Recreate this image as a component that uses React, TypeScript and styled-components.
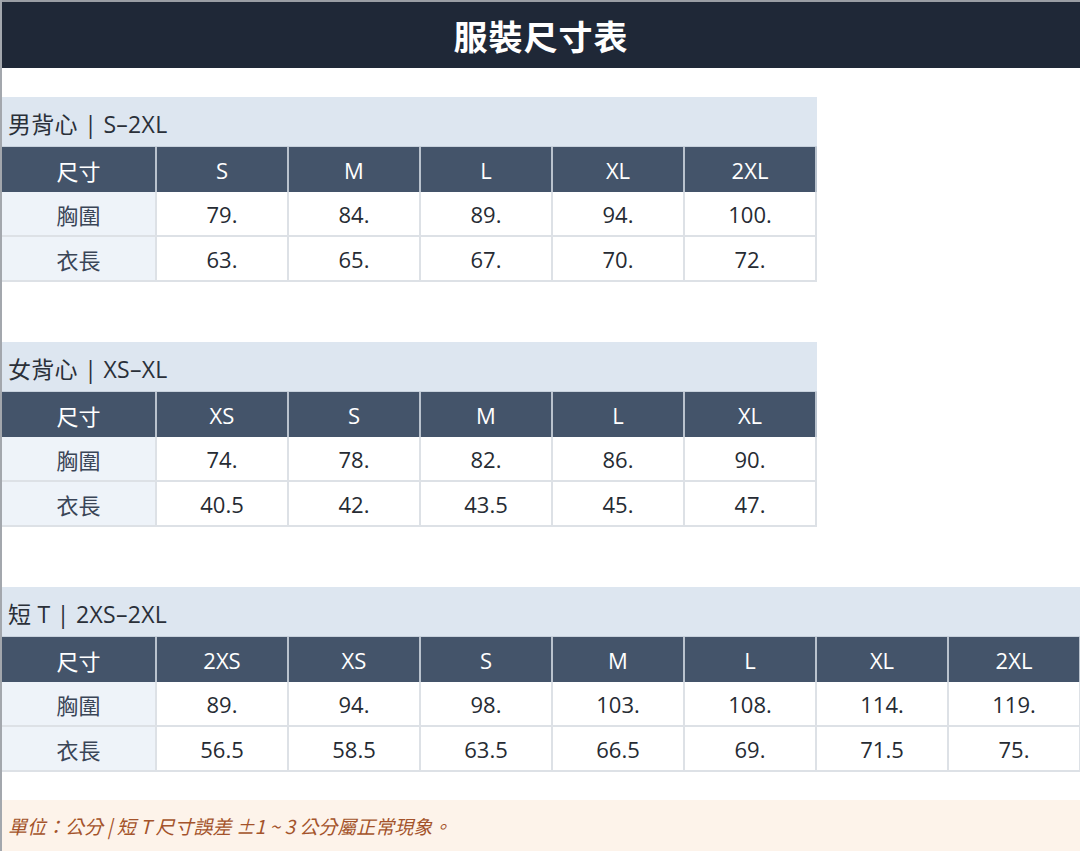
import React from "react";
import styled, { createGlobalStyle } from "styled-components";

const Global = createGlobalStyle`
  html, body { margin: 0; padding: 0; background: #ffffff; }
  body { font-family: "Open Sans", "Noto Sans CJK TC", sans-serif; }
`;

const Page = styled.div`
  width: 1080px;
  height: 851px;
  box-sizing: border-box;
  border-left: 2px solid #a3a7ad;
  display: flex;
  flex-direction: column;
  overflow: hidden;
`;

const TitleBar = styled.div`
  height: 68px;
  flex: none;
  box-sizing: border-box;
  border-top: 2px solid #9a9ea4;
  background: #1f2837;
  color: #ffffff;
  display: flex;
  align-items: center;
  justify-content: center;
  font-family: "Noto Sans CJK TC", sans-serif;
  font-weight: 700;
  font-size: 34px;
  letter-spacing: 1px;
`;

const Section = styled.section<{ $top: number }>`
  margin-top: ${(p) => p.$top}px;
  flex: none;
  display: flex;
  flex-direction: column;
`;

const SectionTitle = styled.div<{ $width: number }>`
  width: ${(p) => p.$width}px;
  height: 50px;
  box-sizing: border-box;
  background: #dde6f0;
  border-bottom: 1px solid #c7d1dc;
  display: flex;
  align-items: center;
  padding-left: 6px;
  padding-top: 2px;
  font-family: "Open Sans", "Noto Sans CJK TC", sans-serif;
  font-size: 23px;
  letter-spacing: 0.3px;
  color: #2a3039;
`;

const Grid = styled.div<{ $cols: number }>`
  display: grid;
  grid-template-columns: 155px repeat(${(p) => p.$cols}, 132px);
  grid-auto-rows: 45px;
`;

const HeadCell = styled.div`
  background: #44546a;
  color: #ffffff;
  display: flex;
  align-items: center;
  justify-content: center;
  font-family: "Open Sans", "Noto Sans CJK TC", sans-serif;
  font-size: 22px;
  border-right: 2px solid #b9c2cd;
  box-sizing: border-box;
  &:last-child { border-right: none; }
`;

const Cell = styled.div<{ $label?: boolean }>`
  background: ${(p) => (p.$label ? "#eef3f9" : "#ffffff")};
  color: ${(p) => (p.$label ? "#3a4557" : "#262b33")};
  display: flex;
  align-items: center;
  justify-content: center;
  font-family: "Open Sans", "Noto Sans CJK TC", sans-serif;
  font-size: 22px;
  box-sizing: border-box;
  border-right: 2px solid #dde1e6;
  border-bottom: 2px solid #dde1e6;
`;

const Footer = styled.div`
  margin-top: 28px;
  height: 51px;
  flex: none;
  background: #fdf3ea;
  display: flex;
  align-items: center;
  padding-left: 6px;
  font-family: "Noto Sans CJK TC", sans-serif;
  font-style: italic;
  font-size: 19px;
  color: #a4532b;
`;

type Table = {
  title: string;
  sizes: string[];
  chest: string[];
  length: string[];
  top: number;
};

const tables: Table[] = [
  {
    title: "男背心 | S–2XL",
    sizes: ["S", "M", "L", "XL", "2XL"],
    chest: ["79.", "84.", "89.", "94.", "100."],
    length: ["63.", "65.", "67.", "70.", "72."],
    top: 29,
  },
  {
    title: "女背心 | XS–XL",
    sizes: ["XS", "S", "M", "L", "XL"],
    chest: ["74.", "78.", "82.", "86.", "90."],
    length: ["40.5", "42.", "43.5", "45.", "47."],
    top: 60,
  },
  {
    title: "短 T | 2XS–2XL",
    sizes: ["2XS", "XS", "S", "M", "L", "XL", "2XL"],
    chest: ["89.", "94.", "98.", "103.", "108.", "114.", "119."],
    length: ["56.5", "58.5", "63.5", "66.5", "69.", "71.5", "75."],
    top: 60,
  },
];

export default function App() {
  return (
    <>
      <Global />
      <Page lang="zh-Hant">
        <TitleBar>服裝尺寸表</TitleBar>
        {tables.map((t) => {
          const width = 155 + t.sizes.length * 132;
          return (
            <Section key={t.title} $top={t.top}>
              <SectionTitle $width={Math.min(width, 1078)}>{t.title}</SectionTitle>
              <Grid $cols={t.sizes.length}>
                <HeadCell>尺寸</HeadCell>
                {t.sizes.map((s) => (
                  <HeadCell key={s}>{s}</HeadCell>
                ))}
                <Cell $label>胸圍</Cell>
                {t.chest.map((v, i) => (
                  <Cell key={i}>{v}</Cell>
                ))}
                <Cell $label>衣長</Cell>
                {t.length.map((v, i) => (
                  <Cell key={i}>{v}</Cell>
                ))}
              </Grid>
            </Section>
          );
        })}
        <Footer>單位：公分 | 短 T 尺寸誤差 ±1 ~ 3 公分屬正常現象。</Footer>
      </Page>
    </>
  );
}
